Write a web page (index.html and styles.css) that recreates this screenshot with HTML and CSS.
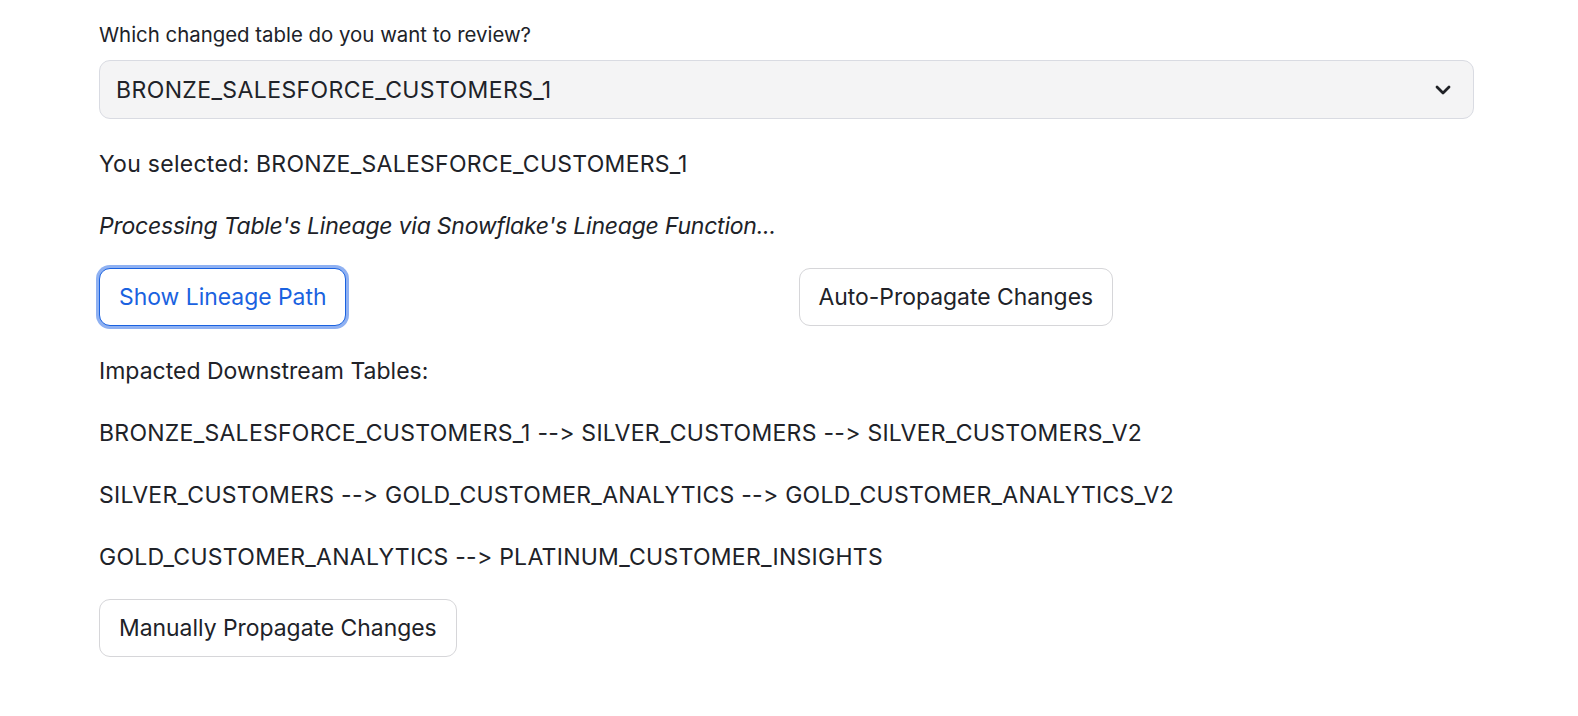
FILE: index.html
```html
<!DOCTYPE html>
<html>
<head>
<meta charset="utf-8">
<link rel="stylesheet" href="styles.css">
</head>
<body>
<main class="main">
  <div class="field">
    <label class="label">Which changed table do you want to review?</label>
    <div class="select">
      <span class="select-value">BRONZE_SALESFORCE_CUSTOMERS_1</span>
      <svg class="chevron" width="16" height="10" viewBox="0 0 16 10"><path d="M2 2 L8 8 L14 2" fill="none" stroke="#1f2126" stroke-width="2.8" stroke-linecap="round" stroke-linejoin="round"/></svg>
    </div>
  </div>
  <p class="text ids">You selected: BRONZE_SALESFORCE_CUSTOMERS_1</p>
  <p class="text"><em class="note">Processing Table's Lineage via Snowflake's Lineage Function...</em></p>
  <div class="cols">
    <div class="col"><button class="btn btn-focus">Show Lineage Path</button></div>
    <div class="col"><button class="btn">Auto-Propagate Changes</button></div>
  </div>
  <p class="text">Impacted Downstream Tables:</p>
  <p class="text ids">BRONZE_SALESFORCE_CUSTOMERS_1 --&gt; SILVER_CUSTOMERS --&gt; SILVER_CUSTOMERS_V2</p>
  <p class="text ids">SILVER_CUSTOMERS --&gt; GOLD_CUSTOMER_ANALYTICS --&gt; GOLD_CUSTOMER_ANALYTICS_V2</p>
  <p class="text ids">GOLD_CUSTOMER_ANALYTICS --&gt; PLATINUM_CUSTOMER_INSIGHTS</p>
  <div class="row"><button class="btn">Manually Propagate Changes</button></div>
</main>
</body>
</html>
```

FILE: styles.css
```css
html, body {
  margin: 0;
  padding: 0;
  background: #ffffff;
}
body {
  font-family: Inter, "Noto Sans", sans-serif;
  font-variant-ligatures: none;
  font-feature-settings: "calt" 0, "liga" 0;
  color: #202228;
}
.main {
  width: 1375px;
  margin-left: 99px;
  padding-top: 22px;
  display: flex;
  flex-direction: column;
  gap: 27px;
}
.field {
  display: flex;
  flex-direction: column;
  margin-bottom: 1px;
}
.label {
  font-size: 20.4px;
  line-height: 26px;
  margin-bottom: 12px;
}
.select {
  height: 59px;
  box-sizing: border-box;
  background: #f4f4f5;
  border: 1px solid #d9dbe2;
  border-radius: 11px;
  display: flex;
  align-items: center;
  justify-content: space-between;
  padding: 0 22px 0 16px;
}
.select-value {
  font-size: 23px;
  letter-spacing: 0.4px;
}
.text {
  margin: 0;
  font-size: 23px;
  line-height: 35px;
}
.ids {
  letter-spacing: 0.27px;
}
.note {
  letter-spacing: -0.23px;
}
.cols {
  display: grid;
  grid-template-columns: 1fr 1fr;
  column-gap: 24px;
  margin-top: -3px;
  margin-bottom: 1px;
}
.btn {
  font-family: inherit;
  font-variant-ligatures: none;
  font-size: 22.9px;
  color: #202228;
  background: #ffffff;
  border: 1px solid #d6d6d9;
  border-radius: 11px;
  height: 58px;
  padding: 0 19px;
  cursor: pointer;
}
.btn-focus {
  color: #1a62e0;
  border-color: #1a62e0;
  box-shadow: 0 0 0 3px #8fb1f2;
}
.row {
  display: flex;
  margin-top: -3px;
}
```
